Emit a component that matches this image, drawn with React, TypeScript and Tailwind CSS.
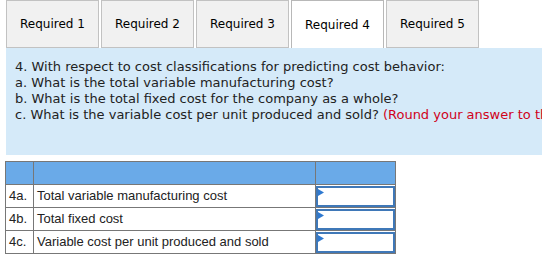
import React from "react";

const tabs = ["Required 1", "Required 2", "Required 3", "Required 4", "Required 5"];

const rows = [
  ["4a.", "Total variable manufacturing cost"],
  ["4b.", "Total fixed cost"],
  ["4c.", "Variable cost per unit produced and sold"],
];

export default function App() {
  return (
    <div className="w-[542px] h-[258px] overflow-hidden bg-white">
      <div className="flex gap-[2px] pl-[6px] h-[48px]">
        {tabs.map((t, i) => (
          <div
            key={t}
            className={
              i === 3
                ? "w-[93px] h-[48px] border border-b-0 border-[#b8b8b8] bg-white flex items-center justify-center text-[12px] text-black font-['DejaVu_Sans',sans-serif]"
                : "w-[93px] h-[48px] border border-[#c2c2c2] bg-[#f1f1f1] flex items-center justify-center text-[12px] text-black font-['DejaVu_Sans',sans-serif]"
            }
          >
            {t}
          </div>
        ))}
      </div>
      <div className="ml-[6px] h-[107px] bg-[#d5eaf9] pt-[11px] pl-[9px] text-[13px] leading-[16px] text-[#222] font-['DejaVu_Sans',sans-serif] whitespace-nowrap overflow-hidden">
        <div>4. With respect to cost classifications for predicting cost behavior:</div>
        <div>a. What is the total variable manufacturing cost?</div>
        <div>b. What is the total fixed cost for the company as a whole?</div>
        <div>
          c. What is the variable cost per unit produced and sold?{" "}
          <span className="text-[#d0021b]">(Round your answer to the nearest whole cent.)</span>
        </div>
      </div>
      <table className="ml-[5px] mt-[6px] border-collapse font-['Liberation_Sans',Arial,sans-serif] text-[13px] text-[#222]">
        <tbody>
          <tr className="h-[23px] bg-[#6aaae8]">
            <td className="w-[28px] border border-[#777] p-0"></td>
            <td className="w-[282px] border border-[#777] p-0"></td>
            <td className="w-[80px] border border-[#777] p-0"></td>
          </tr>
          {rows.map(([a, b]) => (
            <tr key={a} className="h-[23px]">
              <td className="border border-[#777] pl-[3px] p-0">{a}</td>
              <td className="border border-[#777] pl-[3px] p-0">{b}</td>
              <td className="border border-[#777] p-0">
                <div className="relative w-[79px] h-[21px] border-[2px] border-[#3f78b8] bg-white">
                  <svg className="absolute left-[0px] top-[1px]" width="6" height="7" viewBox="0 0 6 7">
                    <polygon points="0,0 6,3.5 0,7" fill="#2f79d0" />
                  </svg>
                </div>
              </td>
            </tr>
          ))}
        </tbody>
      </table>
    </div>
  );
}
